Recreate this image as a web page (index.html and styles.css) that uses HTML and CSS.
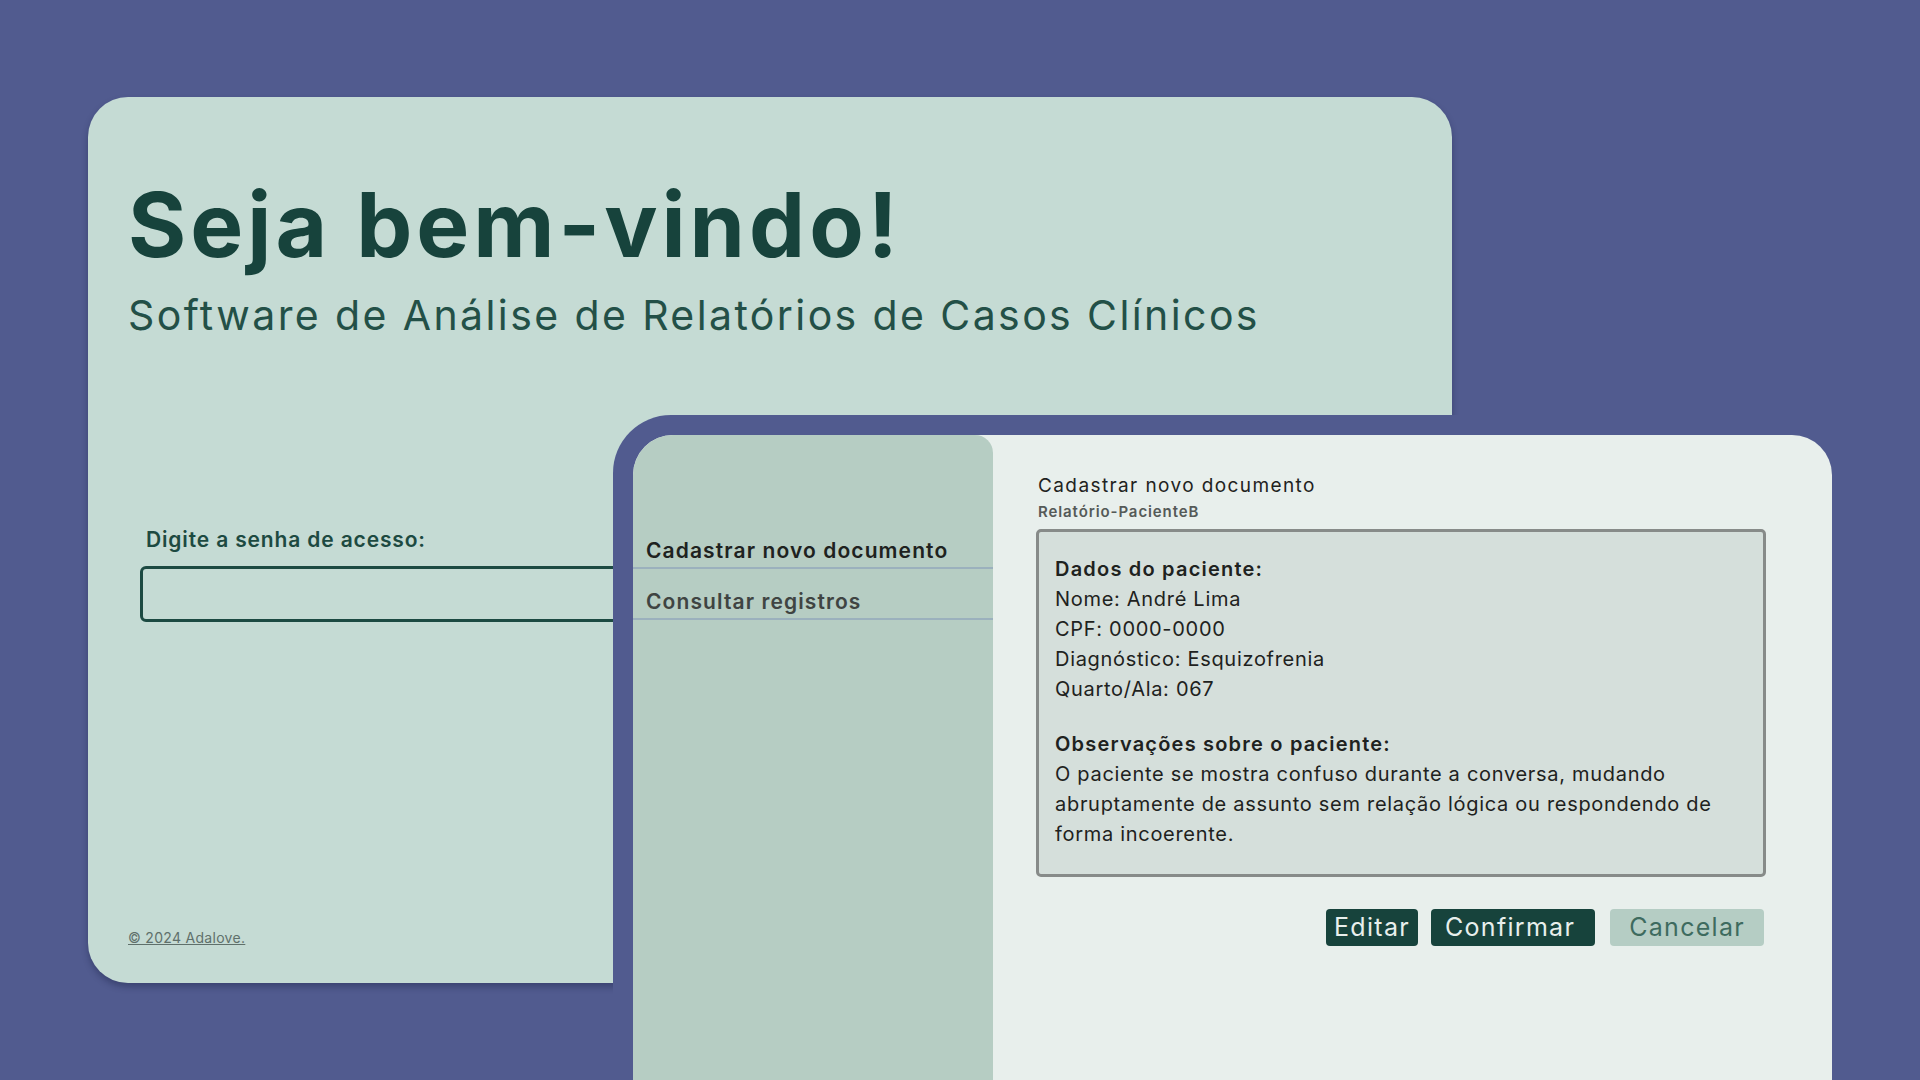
FILE: index.html
```html
<!DOCTYPE html>
<html lang="pt-BR">
<head>
<meta charset="utf-8">
<title>Adalove</title>
<link rel="stylesheet" href="styles.css">
</head>
<body>
<main class="stage">
  <section class="welcome-card">
    <h1 class="title">Seja bem-vindo!</h1>
    <p class="subtitle">Software de Análise de Relatórios de Casos Clínicos</p>
    <div class="login">
      <label class="login-label" for="senha">Digite a senha de acesso:</label>
      <input class="login-input" id="senha" type="password">
    </div>
    <footer class="footer"><a class="footer-link" href="#">© 2024 Adalove.</a></footer>
  </section>

  <section class="app-frame">
    <div class="app-panel">
      <nav class="sidebar">
        <a class="nav-item active" href="#">Cadastrar novo documento</a>
        <a class="nav-item" href="#">Consultar registros</a>
      </nav>
      <div class="content">
        <h2 class="content-title">Cadastrar novo documento</h2>
        <p class="doc-name">Relatório-PacienteB</p>
        <div class="doc-box">
          <p class="doc-head">Dados do paciente:</p>
          <p class="doc-line">Nome: André Lima</p>
          <p class="doc-line">CPF: 0000-0000</p>
          <p class="doc-line">Diagnóstico: Esquizofrenia</p>
          <p class="doc-line">Quarto/Ala: 067</p>
          <p class="doc-head doc-gap">Observações sobre o paciente:</p>
          <p class="doc-line">O paciente se mostra confuso durante a conversa, mudando abruptamente de assunto sem relação lógica ou respondendo de forma incoerente.</p>
        </div>
        <div class="actions">
          <button class="btn btn-dark btn-edit">Editar</button>
          <button class="btn btn-dark btn-confirm">Confirmar</button>
          <button class="btn btn-light">Cancelar</button>
        </div>
      </div>
    </div>
  </section>
</main>
</body>
</html>
```
FILE: styles.css
```css
* { box-sizing: border-box; }
html, body { margin: 0; padding: 0; }
body {
  width: 1920px;
  height: 1080px;
  overflow: hidden;
  background: #515b8f;
  font-family: Inter, "Noto Sans", sans-serif;
}
.stage {
  position: relative;
  width: 1920px;
  height: 1080px;
  padding: 97px 0 0 88px;
}
.welcome-card {
  width: 1364px;
  height: 886px;
  background: #c5dbd4;
  border-radius: 40px;
  box-shadow: 0 4px 6px rgba(20, 25, 60, 0.35);
  padding: 74px 40px 0 40px;
  display: flex;
  flex-direction: column;
}
.title {
  margin: 0;
  font-size: 89px;
  font-weight: 700;
  line-height: 108px;
  color: #17433c;
  letter-spacing: 4px;
}
.subtitle {
  margin: 11px 0 0 0;
  font-size: 41px;
  font-weight: 400;
  line-height: 50px;
  color: #235047;
  letter-spacing: 2.4px;
}
.login {
  margin: 186px 0 0 12px;
  display: flex;
  flex-direction: column;
}
.login-label {
  font-size: 21px;
  font-weight: 600;
  color: #1d4a41;
  line-height: 28px;
  padding-left: 6px;
  letter-spacing: 0.85px;
}
.login-input {
  margin-top: 12px;
  width: 600px;
  height: 56px;
  border: 3px solid #1c4a42;
  border-radius: 6px;
  background: transparent;
}
.footer {
  margin-top: auto;
  padding-bottom: 36px;
}
.footer-link {
  font-size: 14px;
  color: #5f706b;
  text-decoration: underline;
  letter-spacing: 0.3px;
}

.app-frame {
  position: absolute;
  left: 613px;
  top: 415px;
  right: 0;
  bottom: 0;
  background: #515b8f;
  border-top-left-radius: 58px;
  padding: 20px 88px 0 20px;
}
.app-panel {
  height: 100%;
  display: grid;
  grid-template-columns: 360px 1fr;
  background: #e8efec;
  border-top-left-radius: 40px;
  border-top-right-radius: 40px;
}
.sidebar {
  background: #b6cdc3;
  border-top-left-radius: 40px;
  border-top-right-radius: 18px;
  padding-top: 83px;
  display: flex;
  flex-direction: column;
}
.nav-item {
  display: block;
  padding: 16px 0 0 13px;
  font-size: 21px;
  line-height: 33px;
  font-weight: 600;
  color: #3f4442;
  text-decoration: none;
  border-bottom: 2px solid #9bb1bd;
  letter-spacing: 1.1px;
}
.nav-item.active { color: #1e2220; }
.content {
  padding: 38px 66px 0 43px;
}
.content-title {
  margin: 0;
  padding-left: 2px;
  font-size: 19px;
  font-weight: 400;
  line-height: 26px;
  color: #1f2321;
  letter-spacing: 1.4px;
}
.doc-name {
  margin: 2px 0 0 0;
  padding-left: 2px;
  font-size: 15px;
  font-weight: 600;
  line-height: 22px;
  color: #555a58;
  letter-spacing: 0.9px;
}
.doc-box {
  margin-top: 6px;
  height: 348px;
  background: #d5dfdb;
  border: 3px solid #878b89;
  border-radius: 5px;
  padding: 22px 16px 0 16px;
}
.doc-box p { margin: 0; }
.doc-head {
  font-size: 20px;
  font-weight: 600;
  line-height: 30px;
  color: #1e2220;
  letter-spacing: 1.2px;
}
.doc-line {
  font-size: 20px;
  font-weight: 400;
  line-height: 30px;
  color: #1e2220;
  letter-spacing: 0.7px;
}
.doc-gap { margin-top: 25px !important; }
.actions {
  margin-top: 32px;
  display: flex;
  justify-content: flex-end;
  padding-right: 2px;
}
.btn {
  height: 37px;
  border: none;
  border-radius: 4px;
  font-family: Inter, "Noto Sans", sans-serif;
  font-size: 25px;
  font-weight: 400;
  line-height: 37px;
  letter-spacing: 1.3px;
  padding: 0 8px;
}
.btn-dark { background: #17433c; color: #e8efec; }
.btn-confirm { padding: 0 20px 0 14px; margin-left: 13px; }
.btn-light { background: #b5cdc4; color: #3e6b5f; padding: 0 19px; margin-left: 15px; }
```
